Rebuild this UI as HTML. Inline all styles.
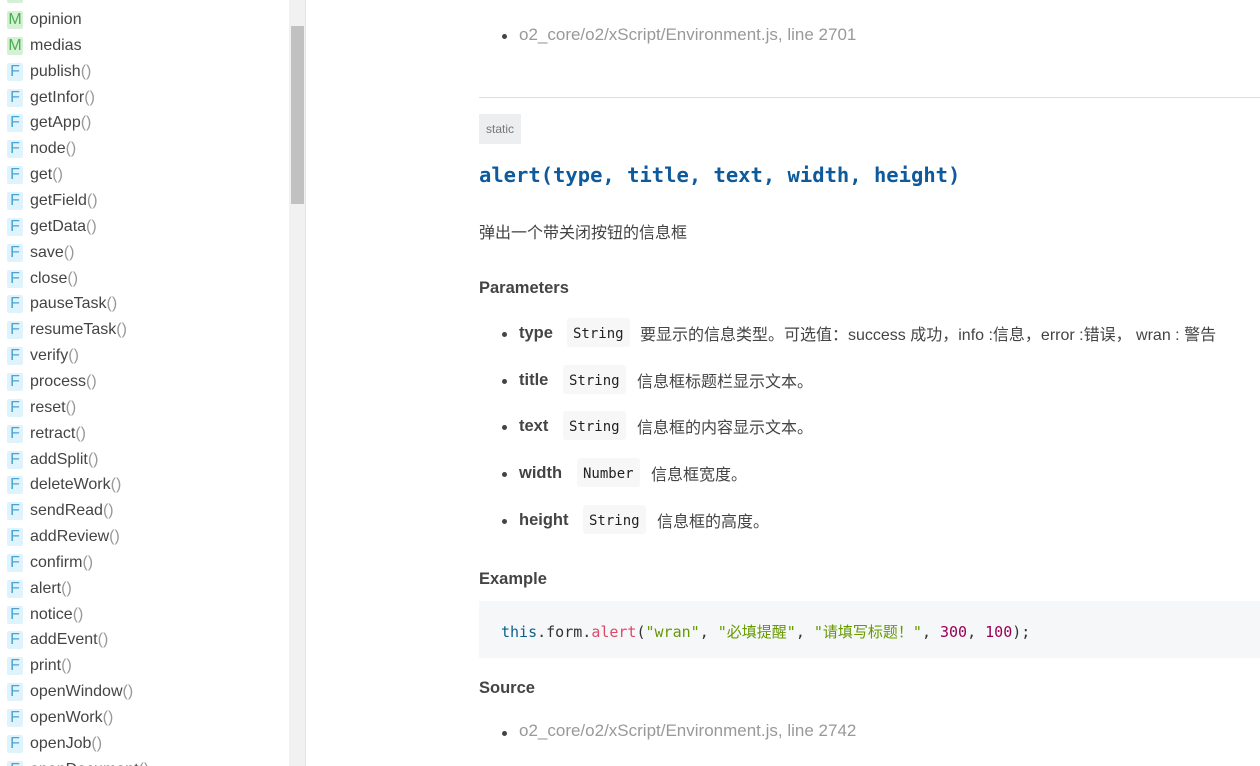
<!DOCTYPE html>
<html><head><meta charset="utf-8"><style>
*{margin:0;padding:0;box-sizing:border-box}
body{width:1260px;height:766px;overflow:hidden;background:#fff;font-family:"Liberation Sans","Noto Sans CJK SC",sans-serif;color:#444;position:relative}
#side{position:absolute;left:0;top:0;width:289px;height:766px;overflow:hidden}
.it{position:absolute;left:0;height:26px;line-height:26px;font-size:16px;color:#444;white-space:nowrap}
.ic{position:absolute;left:7px;top:4px;width:16px;height:18px;line-height:18px;text-align:center;font-size:16px;border-radius:2px}
.M{background:#d6f0d6;color:#48b04f}
.F{background:#dff3fc;color:#4aa3d4}
.nm{position:absolute;left:30px;top:0}
.p{color:#999}
#track{position:absolute;left:289px;top:0;width:16px;height:766px;background:#f1f1f1}
#thumb{position:absolute;left:291px;top:26px;width:13px;height:178px;background:#c1c1c1}
#bd{position:absolute;left:305px;top:0;width:1px;height:766px;background:#e4e4e4}
.a{position:absolute;white-space:nowrap}
.src{font-size:17px;color:#999}
.dot{position:absolute;width:5px;height:5px;border-radius:50%;background:#444}
.h{font-weight:bold;font-size:16.5px;color:#444}
.cn{font-size:16px;color:#444}
.box{position:absolute;background:#f7f7f7;border-radius:3px;font-family:"DejaVu Sans Mono","Liberation Mono",monospace;font-size:14px;color:#222;height:29px;line-height:32px;padding:0 6px}
.mono{font-family:"DejaVu Sans Mono","Liberation Mono","Noto Sans CJK SC",monospace}
</style></head><body>
<div id="side">
<div class="it" style="top:-19px"><span class="ic M">M</span><span class="nm">attachment</span></div>
<div class="it" style="top:7px"><span class="ic M">M</span><span class="nm">opinion</span></div>
<div class="it" style="top:32.9px"><span class="ic M">M</span><span class="nm">medias</span></div>
<div class="it" style="top:58.7px"><span class="ic F">F</span><span class="nm">publish<span class="p">()</span></span></div>
<div class="it" style="top:84.6px"><span class="ic F">F</span><span class="nm">getInfor<span class="p">()</span></span></div>
<div class="it" style="top:110.4px"><span class="ic F">F</span><span class="nm">getApp<span class="p">()</span></span></div>
<div class="it" style="top:136.3px"><span class="ic F">F</span><span class="nm">node<span class="p">()</span></span></div>
<div class="it" style="top:162.1px"><span class="ic F">F</span><span class="nm">get<span class="p">()</span></span></div>
<div class="it" style="top:188px"><span class="ic F">F</span><span class="nm">getField<span class="p">()</span></span></div>
<div class="it" style="top:213.8px"><span class="ic F">F</span><span class="nm">getData<span class="p">()</span></span></div>
<div class="it" style="top:239.7px"><span class="ic F">F</span><span class="nm">save<span class="p">()</span></span></div>
<div class="it" style="top:265.5px"><span class="ic F">F</span><span class="nm">close<span class="p">()</span></span></div>
<div class="it" style="top:291.4px"><span class="ic F">F</span><span class="nm">pauseTask<span class="p">()</span></span></div>
<div class="it" style="top:317.2px"><span class="ic F">F</span><span class="nm">resumeTask<span class="p">()</span></span></div>
<div class="it" style="top:343.1px"><span class="ic F">F</span><span class="nm">verify<span class="p">()</span></span></div>
<div class="it" style="top:368.9px"><span class="ic F">F</span><span class="nm">process<span class="p">()</span></span></div>
<div class="it" style="top:394.8px"><span class="ic F">F</span><span class="nm">reset<span class="p">()</span></span></div>
<div class="it" style="top:420.6px"><span class="ic F">F</span><span class="nm">retract<span class="p">()</span></span></div>
<div class="it" style="top:446.5px"><span class="ic F">F</span><span class="nm">addSplit<span class="p">()</span></span></div>
<div class="it" style="top:472.3px"><span class="ic F">F</span><span class="nm">deleteWork<span class="p">()</span></span></div>
<div class="it" style="top:498.2px"><span class="ic F">F</span><span class="nm">sendRead<span class="p">()</span></span></div>
<div class="it" style="top:524px"><span class="ic F">F</span><span class="nm">addReview<span class="p">()</span></span></div>
<div class="it" style="top:549.9px"><span class="ic F">F</span><span class="nm">confirm<span class="p">()</span></span></div>
<div class="it" style="top:575.7px"><span class="ic F">F</span><span class="nm">alert<span class="p">()</span></span></div>
<div class="it" style="top:601.6px"><span class="ic F">F</span><span class="nm">notice<span class="p">()</span></span></div>
<div class="it" style="top:627.4px"><span class="ic F">F</span><span class="nm">addEvent<span class="p">()</span></span></div>
<div class="it" style="top:653.3px"><span class="ic F">F</span><span class="nm">print<span class="p">()</span></span></div>
<div class="it" style="top:679.1px"><span class="ic F">F</span><span class="nm">openWindow<span class="p">()</span></span></div>
<div class="it" style="top:705px"><span class="ic F">F</span><span class="nm">openWork<span class="p">()</span></span></div>
<div class="it" style="top:730.8px"><span class="ic F">F</span><span class="nm">openJob<span class="p">()</span></span></div>
<div class="it" style="top:756.7px"><span class="ic F">F</span><span class="nm">openDocument<span class="p">()</span></span></div>
</div>
<div id="track"></div><div id="thumb"></div><div id="bd"></div>

<div class="dot" style="left:502px;top:34px"></div>
<div class="a src" style="left:519px;top:25px">o2_core/o2/xScript/Environment.js, line 2701</div>
<div class="a" style="left:479px;top:97px;width:781px;height:1px;background:#ddd"></div>
<div class="a" style="left:479px;top:114px;width:42px;height:30px;background:#eceeef;color:#777;font-size:12px;line-height:30px;text-align:center">static</div>
<div class="a mono" style="left:479px;top:163px;font-size:20.5px;font-weight:bold;color:#0d5a9c">alert(type, title, text, width, height)</div>
<div class="a cn" style="left:479px;top:219px">弹出一个带关闭按钮的信息框</div>
<div class="a h" style="left:479px;top:279px">Parameters</div>

<div class="dot" style="left:502px;top:332px"></div>
<div class="a h" style="left:519px;top:324px">type</div>
<div class="box" style="left:567px;top:318px">String</div>
<div class="a cn" style="left:640px;top:321px">要显示的信息类型。可选值：success 成功，info :信息，error :错误， wran : 警告</div>

<div class="dot" style="left:502px;top:379px"></div>
<div class="a h" style="left:519px;top:371px">title</div>
<div class="box" style="left:563px;top:365px">String</div>
<div class="a cn" style="left:637px;top:368px">信息框标题栏显示文本。</div>

<div class="dot" style="left:502px;top:425px"></div>
<div class="a h" style="left:519px;top:417px">text</div>
<div class="box" style="left:563px;top:411px">String</div>
<div class="a cn" style="left:637px;top:414px">信息框的内容显示文本。</div>

<div class="dot" style="left:502px;top:472px"></div>
<div class="a h" style="left:519px;top:464px">width</div>
<div class="box" style="left:577px;top:458px">Number</div>
<div class="a cn" style="left:651px;top:461px">信息框宽度。</div>

<div class="dot" style="left:502px;top:519px"></div>
<div class="a h" style="left:519px;top:511px">height</div>
<div class="box" style="left:583px;top:505px">String</div>
<div class="a cn" style="left:657px;top:508px">信息框的高度。</div>

<div class="a h" style="left:479px;top:570px">Example</div>
<div class="a" style="left:479px;top:601px;width:781px;height:57px;background:#f6f7f9"></div>
<div class="a mono" style="left:501px;top:621px;font-size:15px;color:#333"><span style="color:#0e5f8e">this</span>.form.<span style="color:#dd4a68">alert</span>(<span style="color:#669900">"wran"</span>, <span style="color:#669900">"必填提醒"</span>, <span style="color:#669900">"请填写标题！"</span>, <span style="color:#990055">300</span>, <span style="color:#990055">100</span>);</div>
<div class="a h" style="left:479px;top:679px">Source</div>
<div class="dot" style="left:502px;top:731px"></div>
<div class="a src" style="left:519px;top:721px">o2_core/o2/xScript/Environment.js, line 2742</div>
</body></html>
